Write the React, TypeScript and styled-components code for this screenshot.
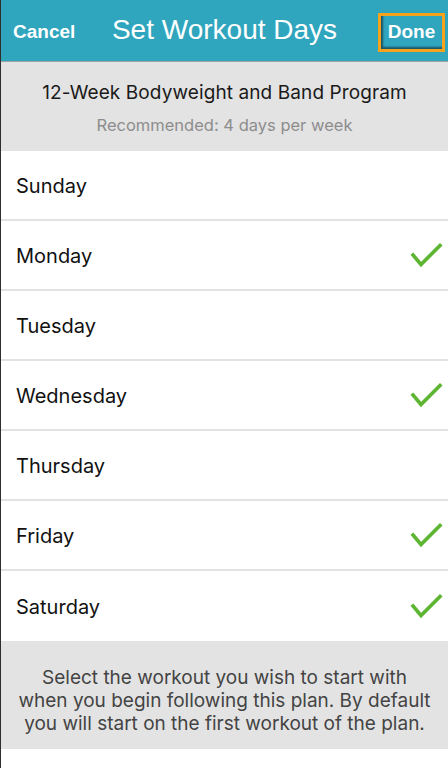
import styled, { createGlobalStyle } from 'styled-components';

const GlobalStyle = createGlobalStyle`
  html, body {
    margin: 0;
    padding: 0;
    background: #fff;
  }
  * {
    box-sizing: border-box;
  }
`;

const Screen = styled.div`
  width: 448px;
  min-height: 768px;
  border-left: 1px solid #2e2e2e;
  background: #fff;
  font-family: Inter, "Liberation Sans", sans-serif;
  color: #111;
`;

const NavBar = styled.header`
  display: grid;
  grid-template-columns: 1fr auto 1fr;
  align-items: center;
  height: 62px;
  background: #2fa5be;
  border-bottom: 1px solid #9aa3a6;
  font-family: "Liberation Sans", Arial, sans-serif;
  color: #fff;
`;

const NavButton = styled.span`
  justify-self: start;
  padding-left: 12px;
  padding-top: 3px;
  font-size: 19px;
  font-weight: 600;
`;

const NavTitle = styled.h1`
  margin: 0;
  padding-bottom: 2px;
  font-size: 28px;
  font-weight: 400;
`;

const DoneButton = styled.span`
  justify-self: end;
  margin-right: 3px;
  margin-top: 3px;
  width: 67px;
  height: 39px;
  display: flex;
  align-items: center;
  justify-content: center;
  border: 3px solid #f5a31c;
  box-shadow: inset 2px -2px 2px rgba(20, 50, 60, 0.7);
  font-size: 19px;
  font-weight: 600;
`;

const PlanPanel = styled.section`
  height: 89px;
  background: #e3e3e3;
  display: flex;
  flex-direction: column;
  align-items: center;
  padding-top: 19px;
  gap: 11px;
`;

const PlanName = styled.div`
  font-size: 19px;
  letter-spacing: 0.1px;
  color: #1a1a1a;
`;

const PlanHint = styled.div`
  font-size: 16.5px;
  color: #8d8d8d;
`;

const DayList = styled.ul`
  margin: 0;
  padding: 0;
  list-style: none;
`;

const DayRow = styled.li`
  height: 70px;
  display: flex;
  align-items: center;
  justify-content: space-between;
  padding: 2px 5px 0 15px;
  border-bottom: 2px solid #e2e2e2;
  font-size: 20px;
  color: #111;
  &:last-child {
    border-bottom: 0;
  }
`;

const Note = styled.p`
  margin: 0;
  height: 108px;
  background: #e3e3e3;
  display: flex;
  flex-direction: column;
  align-items: center;
  justify-content: center;
  text-align: center;
  padding-top: 10px;
  font-size: 19px;
  line-height: 23px;
  color: #444;
`;

const NoteLine = styled.span`
  display: block;
  white-space: nowrap;
`;

const Check = () => (
  <svg width="34" height="28" viewBox="0 0 34 28">
    <polyline
      points="4,13 12,22.5 31,3.5"
      fill="none"
      stroke="#5db532"
      strokeWidth="3.6"
      strokeLinecap="square"
    />
  </svg>
);

const days = [
  { name: 'Sunday', selected: false },
  { name: 'Monday', selected: true },
  { name: 'Tuesday', selected: false },
  { name: 'Wednesday', selected: true },
  { name: 'Thursday', selected: false },
  { name: 'Friday', selected: true },
  { name: 'Saturday', selected: true },
];

const noteLines = [
  'Select the workout you wish to start with',
  'when you begin following this plan. By default',
  'you will start on the first workout of the plan.',
];

const App = () => {
  return (
    <Screen>
      <GlobalStyle />
      <NavBar>
        <NavButton>Cancel</NavButton>
        <NavTitle>Set Workout Days</NavTitle>
        <DoneButton>Done</DoneButton>
      </NavBar>

      <PlanPanel>
        <PlanName>12-Week Bodyweight and Band Program</PlanName>
        <PlanHint>Recommended: 4 days per week</PlanHint>
      </PlanPanel>

      <DayList>
        {days.map(day => (
          <DayRow key={day.name}>
            <span>{day.name}</span>
            {day.selected && <Check />}
          </DayRow>
        ))}
      </DayList>

      <Note>
        {noteLines.map(line => (
          <NoteLine key={line}>{line}</NoteLine>
        ))}
      </Note>
    </Screen>
  );
};

export default App;
